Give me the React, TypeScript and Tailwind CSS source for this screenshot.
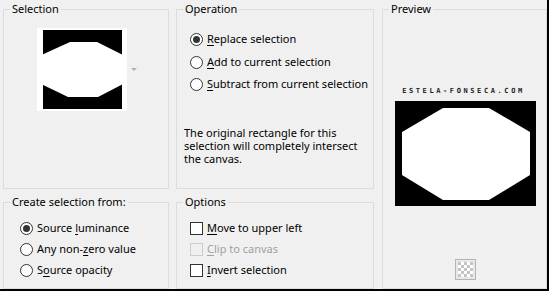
import React from "react";

const font = { fontFamily: '"Noto Sans", "Open Sans", sans-serif' };

function Radio({ checked }: { checked?: boolean }) {
  return (
    <span className="w-[13px] h-[13px] rounded-full border border-[#333] bg-white flex items-center justify-center shrink-0">
      {checked && <span className="w-[7px] h-[7px] rounded-full bg-[#333]" />}
    </span>
  );
}

function Check({ disabled }: { disabled?: boolean }) {
  return (
    <span
      className={
        disabled
          ? "w-[13px] h-[13px] border border-[#cccccc] bg-[#f0f0f0] shrink-0"
          : "w-[13px] h-[13px] border border-[#333] bg-white shrink-0"
      }
    />
  );
}

function U({ children }: { children: React.ReactNode }) {
  return <span className="underline underline-offset-[2px]">{children}</span>;
}

function Legend({ children }: { children: React.ReactNode }) {
  return (
    <legend className="ml-[6px] px-[2px] text-[11px] leading-[16px] text-black whitespace-nowrap">
      {children}
    </legend>
  );
}

export default function App() {
  return (
    <div
      className="w-[549px] h-[291px] bg-[#f0f0f0] flex pl-[3px] pt-[1px] border-r-2 border-b-2 border-black text-[11px] text-black whitespace-nowrap"
      style={font}
    >
      {/* Column 1 */}
      <div className="w-[166px] flex flex-col">
        <fieldset className="h-[188px] border border-[#dcdcdc] p-0 m-0 min-w-0">
          <Legend>Selection</Legend>
          <div className="flex items-center mt-[11px] ml-[33px]">
            <svg width="90" height="83" viewBox="0 0 90 83" className="block">
              <rect x="0" y="0" width="90" height="83" fill="#fff" />
              <rect x="6" y="2" width="79" height="79" fill="#000" />
              <polygon
                points="33,14 60,14 90,29 90,54 61,69 31,69 0,54 0,29"
                fill="#fff"
              />
            </svg>
            <svg width="6" height="4" viewBox="0 0 6 4" className="ml-[4px] block">
              <polygon points="0,0 6,0 3,3" fill="#b0b0b0" />
            </svg>
          </div>
        </fieldset>
        <fieldset className="mt-[5px] h-[95px] border border-[#dcdcdc] p-0 m-0 min-w-0">
          <Legend>Create selection from:</Legend>
          <div className="flex flex-col mt-[8px] ml-[16px]">
            <div className="h-[21px] flex items-center gap-[4px]">
              <Radio checked />
              <span>
                Source <U>l</U>uminance
              </span>
            </div>
            <div className="h-[21px] flex items-center gap-[4px]">
              <Radio />
              <span>
                Any non-<U>z</U>ero value
              </span>
            </div>
            <div className="h-[21px] flex items-center gap-[4px]">
              <Radio />
              <span>
                S<U>o</U>urce opacity
              </span>
            </div>
          </div>
        </fieldset>
      </div>

      {/* Column 2 */}
      <div className="w-[198px] ml-[7px] flex flex-col">
        <fieldset className="h-[188px] border border-[#dcdcdc] p-0 m-0 min-w-0">
          <Legend>Operation</Legend>
          <div className="flex flex-col mt-[11px] ml-[13px]">
            <div className="h-[23px] flex items-center gap-[4px]">
              <Radio checked />
              <span>
                <U>R</U>eplace selection
              </span>
            </div>
            <div className="h-[22px] flex items-center gap-[4px]">
              <Radio />
              <span>
                <U>A</U>dd to current selection
              </span>
            </div>
            <div className="h-[22px] flex items-center gap-[4px]">
              <Radio />
              <span>
                <U>S</U>ubtract from current selection
              </span>
            </div>
          </div>
          <div className="mt-[31px] ml-[7px] flex flex-col">
            <span className="h-[13px] leading-[13px]">The original rectangle for this</span>
            <span className="h-[13px] leading-[13px]">selection will completely intersect</span>
            <span className="h-[13px] leading-[13px]">the canvas.</span>
          </div>
        </fieldset>
        <fieldset className="mt-[5px] h-[95px] border border-[#dcdcdc] p-0 m-0 min-w-0">
          <Legend>Options</Legend>
          <div className="flex flex-col mt-[8px] ml-[13px]">
            <div className="h-[21px] flex items-center gap-[4px]">
              <Check />
              <span>
                <U>M</U>ove to upper left
              </span>
            </div>
            <div className="h-[21px] flex items-center gap-[4px] text-[#a0a0a0]">
              <Check disabled />
              <span>
                <U>C</U>lip to canvas
              </span>
            </div>
            <div className="h-[21px] flex items-center gap-[4px]">
              <Check />
              <span>
                <U>I</U>nvert selection
              </span>
            </div>
          </div>
        </fieldset>
      </div>

      {/* Column 3 */}
      <div className="w-[165px] ml-[8px] flex flex-col">
        <fieldset className="h-[288px] border border-[#dcdcdc] p-0 m-0 min-w-0">
          <Legend>Preview</Legend>
          <div className="flex flex-col ml-[12px]">
            <div
              className="mt-[70px] w-[137px] h-[8px] text-[7px] leading-[8px] tracking-[2.6px] text-[#222] text-center font-bold"
              style={{ fontFamily: '"DejaVu Sans Mono", monospace' }}
            >
              ESTELA-FONSECA.COM
            </div>
            <svg width="141" height="105" viewBox="0 0 141 105" className="mt-[6px] block">
              <rect x="0" y="0" width="141" height="105" fill="#000" />
              <polygon
                points="48,7 94,7 135,31 135,74 94,99 48,99 7,74 7,31"
                fill="#fff"
              />
            </svg>
            <div className="mt-[53px] ml-[60px] w-[21px] h-[21px] border border-[#b4b4b4] bg-[#e8e8e8] p-[2px]">
              <svg width="15" height="15" viewBox="0 0 15 15" className="block">
                <rect width="15" height="15" fill="#ffffff" />
                <rect x="0" y="0" width="3" height="3" fill="#c4c4c4" />
                <rect x="6" y="0" width="3" height="3" fill="#c4c4c4" />
                <rect x="12" y="0" width="3" height="3" fill="#c4c4c4" />
                <rect x="3" y="3" width="3" height="3" fill="#c4c4c4" />
                <rect x="9" y="3" width="3" height="3" fill="#c4c4c4" />
                <rect x="0" y="6" width="3" height="3" fill="#c4c4c4" />
                <rect x="6" y="6" width="3" height="3" fill="#c4c4c4" />
                <rect x="12" y="6" width="3" height="3" fill="#c4c4c4" />
                <rect x="3" y="9" width="3" height="3" fill="#c4c4c4" />
                <rect x="9" y="9" width="3" height="3" fill="#c4c4c4" />
                <rect x="0" y="12" width="3" height="3" fill="#c4c4c4" />
                <rect x="6" y="12" width="3" height="3" fill="#c4c4c4" />
                <rect x="12" y="12" width="3" height="3" fill="#c4c4c4" />
              </svg>
            </div>
          </div>
        </fieldset>
      </div>
    </div>
  );
}
